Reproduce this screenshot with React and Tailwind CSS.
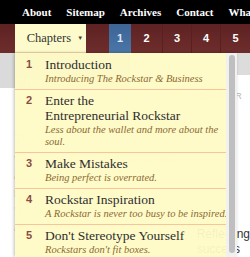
import React from "react";

const serif = { fontFamily: '"Liberation Serif", "DejaVu Serif", serif' };
const sans = { fontFamily: '"Liberation Sans", Arial, sans-serif' };

const items = [
  { n: "1", title: ["Introduction"], sub: ["Introducing The Rockstar & Business"] },
  { n: "2", title: ["Enter the", "Entrepreneurial Rockstar"], sub: ["Less about the wallet and more about the", "soul."] },
  { n: "3", title: ["Make Mistakes"], sub: ["Being perfect is overrated."] },
  { n: "4", title: ["Rockstar Inspiration"], sub: ["A Rockstar is never too busy to be inspired."] },
  { n: "5", title: ["Don't Stereotype Yourself"], sub: ["Rockstars don't fit boxes."] },
];

export default function App() {
  return (
    <div className="relative w-[250px] h-[257px] overflow-hidden bg-white" style={serif}>
      {/* top nav */}
      <div className="h-[24px] bg-black flex items-center pl-[22px] gap-[15px] text-white font-bold text-[11px] whitespace-nowrap pt-[1px]">
        <span>About</span>
        <span>Sitemap</span>
        <span>Archives</span>
        <span>Contact</span>
        <span>What is</span>
      </div>
      {/* maroon bar */}
      <div className="h-[29px] flex bg-gradient-to-b from-[#5e2222] to-[#6e2d2d] whitespace-nowrap">
        <div className="w-[15px]" />
        <div className="w-[73px] bg-[#fdfbcb] flex items-center pl-[12px] text-[12.5px] text-[#333] border-b border-[#f6dcb0]">
          <span>Chapters</span>
          <span className="ml-[6px] text-[6px] text-[#444]">▼</span>
        </div>
        <div className="w-[23px]" />
        <div className="flex text-white font-bold text-[11px]" style={sans}>
          <div className="w-[22px] bg-gradient-to-b from-[#3d6595] to-[#4a76a8] flex items-center justify-center text-[#dfe8f3]">1</div>
          <div className="w-[32px] flex items-center justify-center border-r border-[#5a2020]">2</div>
          <div className="w-[29px] flex items-center justify-center border-r border-[#5a2020]">3</div>
          <div className="w-[29px] flex items-center justify-center border-r border-[#5a2020]">4</div>
          <div className="w-[29px] flex items-center justify-center">5</div>
        </div>
      </div>
      {/* underlying page */}
      <div className="relative h-[204px] flex">
        <div className="w-[237px] flex flex-col">
          <div className="h-[35px] bg-[#dadada] w-[130px]" />
          <div className="pl-[14px] text-[#ddd8c0] leading-[17px] text-[10px] whitespace-nowrap">
            <div className="italic text-[17px] -mt-[14px] text-[#e2ddc0]">Chapters</div>
            <div className="h-[40px]" />
            <div className="italic text-[15px] text-[#e2ddc0]">Twitter</div>
            <div className="mt-[3px]">We're hiring! Become the latest member</div>
            <div>of the WooRoom by applying here:</div>
            <div>http://woothemes.com/jobs</div>
            <div>"I built a business around the</div>
            <div>article" reactions</div>
          </div>
        </div>
        <div className="flex-1 flex flex-col whitespace-nowrap">
          <div className="h-[22px] bg-[#dcdcdc]" />
          <div className="text-[9px] text-[#b5b5b5] mt-[15px] -ml-[26px]" style={sans}>CHAPTER</div>
          <div className="mt-[123px] -ml-[28px] text-[12px] text-[#333] leading-[15px]" style={sans}>
            <div>Reflecting</div>
            <div>success</div>
          </div>
        </div>
        {/* dropdown menu */}
        <div className="absolute left-[15px] top-0 w-[222px] h-[204px] flex shadow-[-1px_0_3px_rgba(0,0,0,0.25)]">
          <div className="w-[211px] bg-[#fffbc6]/[0.95] flex flex-col pt-[1px]">
            {items.map((it, i) => (
              <div
                key={it.n}
                className={`flex pl-[11px] pr-[2px] pt-[3px] pb-[4px] ${i < 4 ? "border-b border-[#f7c59c]" : ""}`}
              >
                <div className="w-[19px] shrink-0 text-[11px] font-bold text-[#8a4c42] leading-[15px]" style={sans}>{it.n}</div>
                <div className="flex-1 min-w-0">
                  {it.title.map((t) => (
                    <div key={t} className="text-[13.5px] leading-[15px] text-[#2e2e2e] whitespace-nowrap">{t}</div>
                  ))}
                  <div className="mt-[1px]">
                    {it.sub.map((t) => (
                      <div key={t} className="italic text-[10.5px] leading-[12px] text-[#8a6a32] whitespace-nowrap">{t}</div>
                    ))}
                  </div>
                </div>
              </div>
            ))}
          </div>
          <div className="w-[11px] bg-[#f1f1f1] flex justify-center pt-[2px] pb-[4px]">
            <div className="w-[6px] h-full rounded-[3px] bg-[#bfbfbf]" />
          </div>
        </div>
      </div>
    </div>
  );
}
